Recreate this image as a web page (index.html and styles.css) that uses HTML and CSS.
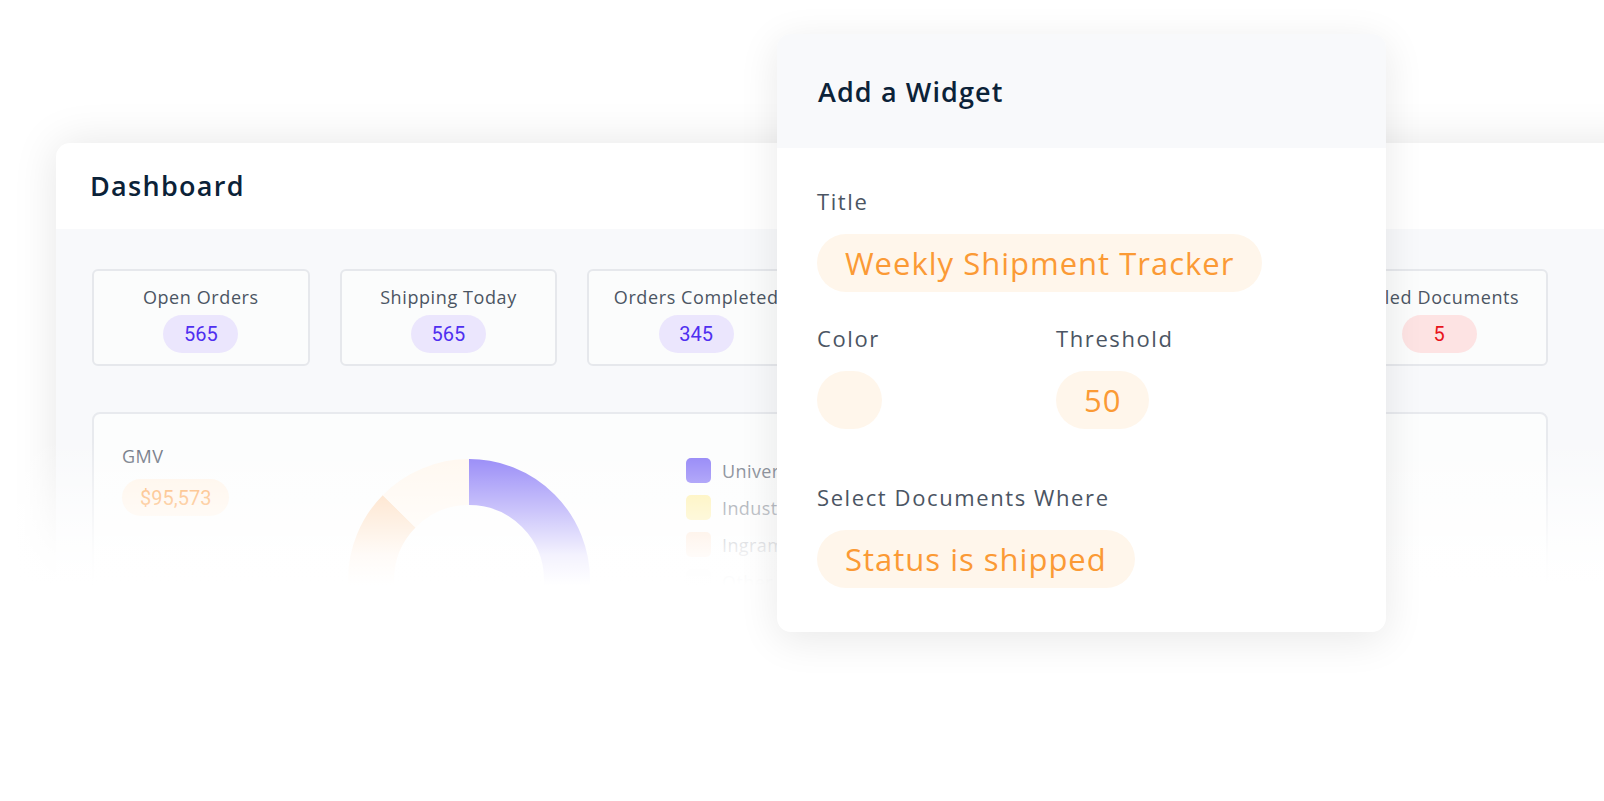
FILE: index.html
```html
<!DOCTYPE html>
<html lang="en">
<head>
    <meta charset="UTF-8">
    <meta name="viewport" content="width=device-width, initial-scale=1.0">
    <title>Dashboard</title>
    <link rel="stylesheet" href="styles.css">
</head>
<body>
    <div class="page">
        <div class="dashboard">
            <div class="dashboard-header">Dashboard</div>
            <div class="dashboard-body">
                <div class="stats">
                    <div class="stat">
                        <span class="stat-label">Open Orders</span>
                        <span class="stat-value">565</span>
                    </div>
                    <div class="stat">
                        <span class="stat-label">Shipping Today</span>
                        <span class="stat-value">565</span>
                    </div>
                    <div class="stat">
                        <span class="stat-label">Orders Completed</span>
                        <span class="stat-value">345</span>
                    </div>
                    <div class="stat">
                        <span class="stat-label">Pending Orders</span>
                        <span class="stat-value">120</span>
                    </div>
                    <div class="stat">
                        <span class="stat-label">Returns</span>
                        <span class="stat-value">12</span>
                    </div>
                    <div class="stat">
                        <span class="stat-label">Failed Documents</span>
                        <span class="stat-value red">5</span>
                    </div>
                </div>

                <div class="gmv">
                    <div class="gmv-info">
                        <span class="gmv-label">GMV</span>
                        <span class="gmv-value">$95,573</span>
                    </div>
                    <svg class="donut" width="242" height="242" viewBox="0 0 242 242">
                        <g transform="rotate(-90 121 121)" fill="none" stroke-width="46">
                            <circle cx="121" cy="121" r="98" stroke="#8b7cf6" stroke-dasharray="290.8 615.75" stroke-dashoffset="0"/>
                            <circle cx="121" cy="121" r="98" stroke="#fdeea0" stroke-dasharray="85.5 615.75" stroke-dashoffset="-290.8"/>
                            <circle cx="121" cy="121" r="98" stroke="#fdd6b2" stroke-dasharray="160.8 615.75" stroke-dashoffset="-376.3"/>
                            <circle cx="121" cy="121" r="98" stroke="#fff7ee" stroke-dasharray="78.7 615.75" stroke-dashoffset="-537.1"/>
                        </g>
                    </svg>
                    <!-- la légende passe sous le panneau du widget -->
                    <ul class="legend">
                        <li><span class="swatch purple"></span>University Supply</li>
                        <li><span class="swatch yellow"></span>Industrial Parts</li>
                        <li><span class="swatch peach"></span>Ingram Micro</li>
                        <li><span class="swatch grey"></span>Other</li>
                    </ul>
                </div>
            </div>
        </div>

        <!-- fondu blanc sur le bas du dashboard -->
        <div class="fade"></div>

        <div class="widget">
            <div class="widget-header">Add a Widget</div>
            <div class="widget-body">
                <label class="field-label">Title</label>
                <div class="pill">Weekly Shipment Tracker</div>

                <div class="field-row">
                    <div class="field">
                        <label class="field-label">Color</label>
                        <div class="pill pill-empty"></div>
                    </div>
                    <div class="field">
                        <label class="field-label">Threshold</label>
                        <div class="pill">50</div>
                    </div>
                </div>

                <label class="field-label where">Select Documents Where</label>
                <div class="pill">Status is shipped</div>
            </div>
        </div>
    </div>
</body>
</html>
```

FILE: styles.css
```css
body{
    margin: 0;
    background-color: #fff;
    font-family: "Open Sans", "Noto Sans", sans-serif;
}
.page{
    position: relative;
    width: 1604px;
    height: 801px;
    overflow: hidden;
    padding: 143px 0 0 56px;
    box-sizing: border-box;
}
.dashboard{
    width: 1600px;
    background-color: #fff;
    border-radius: 14px 0 0 0;
    box-shadow: 0 0 45px rgba(0, 0, 0, 0.1);
    overflow: hidden;
}
.dashboard-header{
    height: 86px;
    display: flex;
    align-items: center;
    padding: 0 0 2px 34px;
    box-sizing: border-box;
    font-size: 27px;
    font-weight: 600;
    letter-spacing: 1.3px;
    color: #0b2238;
}
.dashboard-body{
    background-color: #f8f9fb;
    padding: 40px 36px 0 36px;
    height: 500px;
}
.stats{
    width: 1456px;
    display: grid;
    grid-template-columns: repeat(6, 1fr);
    gap: 30px;
}
.stat{
    height: 97px;
    box-sizing: border-box;
    border: 2px solid #e6e8ec;
    border-radius: 6px;
    background-color: #fbfcfc;
    display: flex;
    flex-direction: column;
    align-items: center;
    padding-top: 14px;
    gap: 6px;
}
.stat-label{
    font-size: 18px;
    line-height: 24px;
    letter-spacing: 0.6px;
    color: #4b5563;
}
.stat-value{
    min-width: 75px;
    height: 38px;
    border-radius: 19px;
    background-color: #ebe6fd;
    color: #4f2ff0;
    font-family: Roboto, sans-serif;
    font-size: 20px;
    display: flex;
    align-items: center;
    justify-content: center;
}
.stat-value.red{
    background-color: #fde3e3;
    color: #e8141b;
}
.gmv{
    width: 1456px;
    height: 420px;
    margin-top: 46px;
    box-sizing: border-box;
    border: 2px solid #e8eaee;
    border-radius: 8px;
    background-color: #fcfdfd;
    display: flex;
    padding: 30px 0 0 28px;
}
.gmv-info{
    width: 226px;
    display: flex;
    flex-direction: column;
    align-items: flex-start;
    gap: 11px;
}
.gmv-label{
    font-size: 18px;
    letter-spacing: 0.5px;
    color: #6b7280;
}
.gmv-value{
    padding: 0 18px;
    height: 37px;
    border-radius: 19px;
    background-color: #fff4e8;
    color: #fca552;
    font-family: Roboto, sans-serif;
    font-size: 20px;
    display: flex;
    align-items: center;
}
.donut{
    margin-top: 15px;
}
.legend{
    list-style: none;
    margin: 14px 0 0 96px;
    padding: 0;
    display: flex;
    flex-direction: column;
    gap: 12px;
}
.legend li{
    display: flex;
    align-items: center;
    gap: 11px;
    height: 25px;
    font-size: 18px;
    letter-spacing: 0.4px;
    color: #6b7280;
    white-space: nowrap;
}
.swatch{
    flex-shrink: 0;
    width: 25px;
    height: 25px;
    border-radius: 5px;
}
.swatch.purple{ background-color: #8b7cf6; }
.swatch.yellow{ background-color: #fdee9f; }
.swatch.peach{ background-color: #fdd9bd; }
.swatch.grey{ background-color: #eeeeee; }

.fade{
    position: absolute;
    left: 0;
    top: 440px;
    width: 100%;
    height: 361px;
    background: linear-gradient(to bottom, rgba(255, 255, 255, 0) 0, rgba(255, 255, 255, 0.55) 70px, rgba(255, 255, 255, 0.9) 115px, #fff 145px);
}

.widget{
    position: absolute;
    left: 777px;
    top: 34px;
    width: 609px;
    height: 598px;
    border-radius: 14px;
    background-color: #fff;
    box-shadow: 0 8px 40px rgba(0, 0, 0, 0.09);
    overflow: hidden;
}
.widget-header{
    height: 114px;
    background-color: #f8f9fb;
    display: flex;
    align-items: center;
    padding-left: 41px;
    font-size: 27px;
    font-weight: 600;
    letter-spacing: 1.1px;
    color: #0b2238;
}
.widget-body{
    padding: 38px 41px 0 40px;
    display: flex;
    flex-direction: column;
    align-items: flex-start;
}
.field-label{
    display: block;
    font-size: 22px;
    line-height: 30px;
    letter-spacing: 1.6px;
    color: #4b5563;
    margin-bottom: 18px;
}
.pill{
    height: 58px;
    box-sizing: border-box;
    padding: 0 28px;
    border-radius: 29px;
    background-color: #fff6eb;
    color: #fb9a35;
    font-size: 31px;
    font-weight: 500;
    letter-spacing: 1px;
    display: flex;
    align-items: center;
}
.pill-empty{
    width: 65px;
    padding: 0;
}
.field-row{
    display: grid;
    grid-template-columns: 239px auto;
    margin-top: 31px;
}
.field{
    display: flex;
    flex-direction: column;
    align-items: flex-start;
}
.where{
    margin-top: 53px;
}
```
